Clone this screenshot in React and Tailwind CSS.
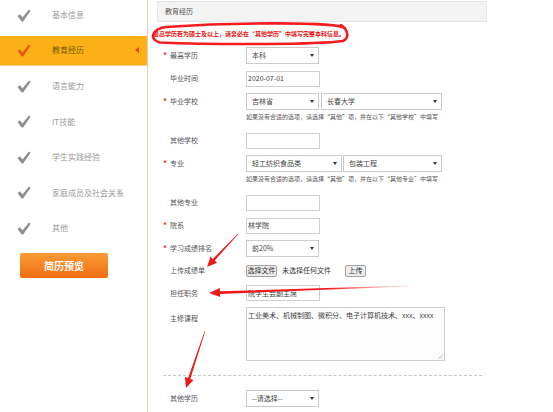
import React from "react";

const navItems = [
  { label: "基本信息" },
  { label: "教育经历", active: true },
  { label: "语言能力" },
  { label: "IT技能" },
  { label: "学生实践经验" },
  { label: "家庭成员及社会关系" },
  { label: "其他" },
];

function Check({ active }) {
  return (
    <svg width="14" height="13" viewBox="0 0 14 13">
      <path
        d="M0.5 7 L3 5.3 L5.4 8.4 L12 0.4 L13.6 1.7 L6.1 12.6 L4.7 12.6 Z"
        fill={active ? "#e8571c" : "#8e8e8e"}
      />
    </svg>
  );
}

function Caret() {
  return (
    <span className="w-0 h-0 border-l-[2.5px] border-r-[2.5px] border-t-[3px] border-l-transparent border-r-transparent border-t-[#333]" />
  );
}

function Select({ w, text }) {
  return (
    <div
      className={`${w} h-[17px] border border-[#cbcbcb] bg-white flex items-center justify-between pl-[5px] pr-[4px] text-[7px] text-[#444]`}
    >
      <span>{text}</span>
      <Caret />
    </div>
  );
}

function Input({ text }) {
  return (
    <div className="w-[74px] h-[16px] border border-[#cfcfcf] bg-white flex items-center pl-[1px] text-[7px] text-[#444]">
      {text}
    </div>
  );
}

function Row({ star, label, children, h = "h-[23px]" }) {
  return (
    <div className={`flex items-center ${h} pl-[15px]`}>
      <span className="w-[7px] text-[8px] font-bold text-[#e8382f] leading-none -mt-[2px]">
        {star ? "*" : ""}
      </span>
      <span className="w-[76px] text-[7px] text-[#555]">{label}</span>
      {children}
    </div>
  );
}

function Hint({ text }) {
  return (
    <div className="h-[16px] pl-[98px] text-[6px] leading-[7px] text-[#555] whitespace-nowrap">
      {text}
    </div>
  );
}

export default function App() {
  return (
    <div className="relative w-[553px] h-[412px] overflow-hidden bg-white flex font-['Noto_Sans_CJK_SC','Noto_Sans',sans-serif]">
      {/* sidebar */}
      <div className="w-[148px] shrink-0 border-r border-[#f3cbb0] flex flex-col">
        <div className="-mt-[2.5px]">
          {navItems.map((item) => (
            <div key={item.label} className="h-[35.5px] py-[2.5px]">
              <div
                className={
                  item.active
                    ? "h-full flex items-center pl-[17px] bg-[#fbb016] border-b border-[#fdd38f]"
                    : "h-full flex items-center pl-[17px]"
                }
              >
                <Check active={item.active} />
                <span
                  className={
                    item.active
                      ? "ml-[21px] text-[8px] text-[#7a5a0a]"
                      : "ml-[21px] text-[8px] text-[#9a9a9a]"
                  }
                >
                  {item.label}
                </span>
                {item.active && (
                  <span className="ml-auto mr-[8px] w-0 h-0 border-t-[3px] border-b-[3px] border-r-[4px] border-t-transparent border-b-transparent border-r-[#e8481c]" />
                )}
              </div>
            </div>
          ))}
        </div>
        <button className="mt-[7px] ml-[20px] w-[88px] h-[25px] rounded-[2px] bg-gradient-to-b from-[#f99a35] to-[#f06d10] text-white text-[10px] font-bold flex items-center justify-center">
          简历预览
        </button>
      </div>

      {/* main */}
      <div className="flex-1 flex flex-col">
        <div className="mt-[1px] ml-[9px] w-[330px] h-[21px] bg-[#f3f3f3] border border-[#e6e6e6] flex items-center pl-[7px] text-[7px] text-[#555]">
          教育经历
        </div>
        <div className="h-[22px] pl-[5px] pt-[8px] text-[6px] leading-[7px] font-bold text-[#e81010] whitespace-nowrap">
          最高学历若为硕士及以上，请务必在“其他学历”中填写完整本科信息。
        </div>

        <Row star label="最高学历">
          <Select w="w-[73px]" text="本科" />
        </Row>
        <Row label="毕业时间">
          <Input text="2020-07-01" />
        </Row>
        <Row star label="毕业学校">
          <Select w="w-[73px]" text="吉林省" />
          <div className="ml-[2px]">
            <Select w="w-[121px]" text="长春大学" />
          </div>
        </Row>
        <Hint text="如果没有合适的选项，请选择“其他”项，并在以下“其他学校”中填写" />
        <Row label="其他学校">
          <Input text="" />
        </Row>
        <Row star label="专业">
          <Select w="w-[96px]" text="轻工纺织食品类" />
          <div className="ml-[1px]">
            <Select w="w-[99px]" text="包装工程" />
          </div>
        </Row>
        <Hint text="如果没有合适的选项，请选择“其他”项，并在以下“其他专业”中填写" />
        <Row label="其他专业">
          <Input text="" />
        </Row>
        <Row star label="院系">
          <Input text="林学院" />
        </Row>
        <Row star label="学习成绩排名">
          <Select w="w-[73px]" text="前20%" />
        </Row>
        <Row label="上传成绩单" h="h-[21px]">
          <div className="flex items-center text-[7px] text-[#333]">
            <span className="w-[31px] h-[12px] border border-[#a5a5a5] rounded-[2px] bg-[#ebebeb] flex items-center justify-center">
              选择文件
            </span>
            <span className="ml-[5px] w-[63px]">未选择任何文件</span>
            <span className="w-[21px] h-[12px] border border-[#a5a5a5] rounded-[2px] bg-[#ebebeb] flex items-center justify-center">
              上传
            </span>
          </div>
        </Row>
        <Row label="担任职务" h="h-[24px]">
          <Input text="院学生会副主席" />
        </Row>
        <div className="flex pl-[15px] pt-[2px]">
          <span className="w-[7px]" />
          <span className="w-[76px] pt-[6px] text-[7px] text-[#555]">主修课程</span>
          <div className="relative w-[199px] h-[54px] border border-[#cdcdcd] bg-[#fcfcfc] pl-[1px] pt-[3px] text-[7px] leading-[9px] text-[#444]">
            工业美术、机械制图、微积分、电子计算机技术、xxx、xxxx
            <svg className="absolute right-[1px] bottom-[1px]" width="5" height="5" viewBox="0 0 5 5">
              <path d="M5 0 L0 5 M5 2.5 L2.5 5" stroke="#aaa" strokeWidth="0.7" />
            </svg>
          </div>
        </div>
        <div className="mt-[14px] ml-[15px] w-[319px] border-t border-dashed border-[#c8c8c8]" />
        <div className="mt-[11px]">
          <Row label="其他学历">
            <Select w="w-[73px]" text="--请选择--" />
          </Row>
        </div>
      </div>

      {/* red annotations drawn on top */}
      <svg
        className="absolute top-0 left-0 pointer-events-none"
        width="553"
        height="412"
        viewBox="0 0 553 412"
      >
        <defs>
          <linearGradient id="fade" gradientUnits="userSpaceOnUse" x1="209" y1="0" x2="408" y2="0">
            <stop offset="0" stopColor="#ee1a1a" />
            <stop offset="0.6" stopColor="#ee1a1a" />
            <stop offset="1" stopColor="#f7a0a0" stopOpacity="0.3" />
          </linearGradient>
        </defs>
        <path
          d="M345 28 C336 22 236 22 166 27 C151 29 149 40 160 42.5 C220 45 318 44.5 343 41 C349 38 349 31 341 25"
          fill="none"
          stroke="#f41c1c"
          strokeWidth="2.6"
          strokeLinecap="round"
        />
        <polygon
          points="238.2,234.2 214.7,260.5 217.1,262.8 207,267 210.5,256.6 212.9,258.9 237.8,233.8"
          fill="#ee1a1a"
        />
        <polygon
          points="408,286.4 220,293.9 220.2,297.1 209,293 219.8,288.1 220,291.3 408,285.6"
          fill="url(#fade)"
        />
        <polygon
          points="205.3,331.1 190.3,378.9 193.5,379.9 186,388 184.9,377.1 188.1,378.1 204.7,330.9"
          fill="#ee1a1a"
        />
      </svg>
    </div>
  );
}
